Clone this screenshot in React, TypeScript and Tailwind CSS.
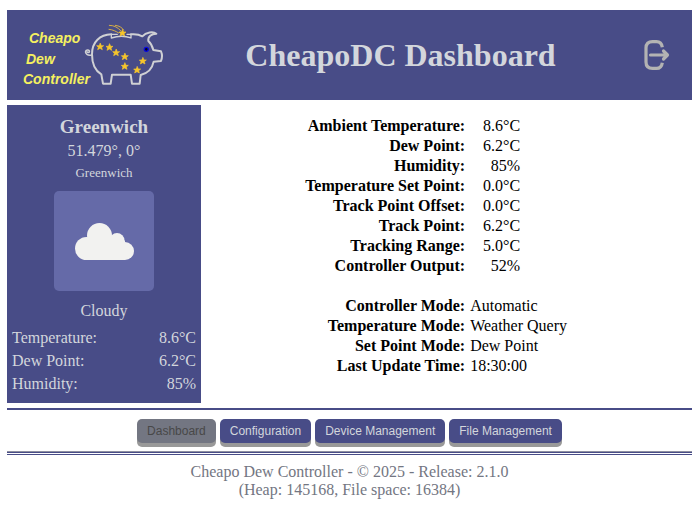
const STARS: [number, number][] = [
  [60, 80], [88, 82], [108, 98], [134, 110], [134, 139], [188, 123], [171, 150], [127, 39],
];

const READINGS = [
  ["Ambient Temperature:", "8.6°C"],
  ["Dew Point:", "6.2°C"],
  ["Humidity:", "85%"],
  ["Temperature Set Point:", "0.0°C"],
  ["Track Point Offset:", "0.0°C"],
  ["Track Point:", "6.2°C"],
  ["Tracking Range:", "5.0°C"],
  ["Controller Output:", "52%"],
];

const MODES = [
  ["Controller Mode:", "Automatic"],
  ["Temperature Mode:", "Weather Query"],
  ["Set Point Mode:", "Dew Point"],
  ["Last Update Time:", "18:30:00"],
];

const WEATHER = [
  ["Temperature:", "8.6°C"],
  ["Dew Point:", "6.2°C"],
  ["Humidity:", "85%"],
];

const PAGES = ["Dashboard", "Configuration", "Device Management", "File Management"];

function Logo() {
  return (
    <svg
      role="img"
      aria-label="Cheapo Dew Controller"
      viewBox="20 20 146 70"
      className="h-[70px] w-[146px] shrink-0"
    >
      <g className="fill-[#f5f060] font-['Liberation_Sans',sans-serif] text-[14px] font-bold italic">
        <text x="29" y="43">Cheapo</text>
        <text x="26" y="64">Dew</text>
        <text x="23" y="84">Controller</text>
      </g>
      <g transform="translate(80 20) scale(0.3333)" fill="none" strokeLinecap="round" strokeLinejoin="round">
        <g stroke="#cfd0d4" strokeWidth="6">
          <path d="M94 43C60 44 36 65 36 103C36 135 48 154 64 163L69 191H92L96 164H152L156 191H179L182 165C204 160 217 145 221 125L243 123C247 113 247 103 243 94L220 90C217 78 213 70 205 63C203 50 214 41 229 41C220 34 198 36 187 49C177 43 164 42 153 43" />
          <path d="M94 43V54C112 48 134 47 153 54V43H141M94 43H112" strokeWidth="4" />
          <path d="M35 105C23 108 15 101 17 94C19 88 29 89 28 95C27 98 23 98 22 96" strokeWidth="5" />
        </g>
        <g stroke="#d5ad45" strokeWidth="3">
          <path d="M88 16C103 16 114 23 122 32" />
          <path d="M106 16C117 17 127 23 131 30" />
          <path d="M87 28C99 29 108 34 116 39" />
        </g>
        {STARS.map(([x, y]) => (
          <path
            key={`${x}-${y}`}
            transform={`translate(${x} ${y})`}
            fill="#f6c52c"
            stroke="#f6c52c"
            strokeWidth="2"
            d="M1-10L4-3L11-3L5 2L7 9L0 5L-7 9L-5 2L-10-3L-3-3Z"
          />
        ))}
        <circle cx="199" cy="88" r="6" fill="#05051c" stroke="#0808e0" strokeWidth="4" />
      </g>
    </svg>
  );
}

function LogoutIcon() {
  return (
    <svg viewBox="0 0 28 32" className="h-8 w-7" fill="none" stroke="#b3b3b3" strokeWidth="3.2" strokeLinecap="round" aria-hidden="true">
      <path d="M19.300 8.300Q18.500 2.600 13.500 2.600H9.500Q3 2.600 3 9V23Q3 29.400 9.500 29.400H13.500Q18.500 29.400 19.300 23.700" strokeLinecap="butt" />
      <path d="M7.500 16H24M20.500 12L24.500 16L20.500 20" strokeLinejoin="round" />
    </svg>
  );
}

function Cloud() {
  return (
    <svg viewBox="-1 -0.5 60 38" className="h-[38px] w-[60px]" fill="#f2f2f0" role="img" aria-label="Cloudy">
      <circle cx="24.500" cy="13" r="12.500" />
      <circle cx="42" cy="18" r="7.500" />
      <circle cx="11.500" cy="26" r="11.500" />
      <circle cx="50" cy="28.500" r="9" />
      <rect x="11.500" y="18" width="38.500" height="19.500" />
    </svg>
  );
}

export default function App() {
  return (
    <div className="bg-white pt-2.5 pr-2 pl-[7px] font-['Liberation_Serif',serif] text-base leading-5 text-black">
      <header className="flex h-[90px] items-center bg-[#484c87] pr-[21px] pl-[13px]">
        <Logo />
        <h1 className="flex-1 pr-2 text-center text-[32px] leading-9 font-bold text-[#d3d6dc]">CheapoDC Dashboard</h1>
        <a href="#logout" aria-label="Log out">
          <LogoutIcon />
        </a>
      </header>

      <div className="mt-[5px] flex">
        <aside className="flex w-[194px] shrink-0 flex-col items-center bg-[#484c87] px-[5px] pt-2.5 pb-2 text-[#d3d6dc]">
          <h2 className="text-[19px] leading-6 font-bold">Greenwich</h2>
          <p className="mt-0.5 leading-5">51.479°, 0°</p>
          <p className="mt-0.5 text-[13px] leading-5">Greenwich</p>
          <div className="mt-2 flex size-[100px] items-center justify-center rounded-[5px] bg-[#656aa8]">
            <Cloud />
          </div>
          <p className="mt-2.5 leading-5">Cloudy</p>
          <table className="mt-[5px] w-full leading-[23px]">
            <tbody>
              {WEATHER.map(([label, value]) => (
                <tr key={label}>
                  <th scope="row" className="text-left font-normal">{label}</th>
                  <td className="text-right">{value}</td>
                </tr>
              ))}
            </tbody>
          </table>
        </aside>

        <main className="flex-1 pt-[11px]">
          <table className="w-full table-fixed">
            <tbody>
              {READINGS.map(([label, value]) => (
                <tr key={label}>
                  <th scope="row" className="w-[54%] pr-px text-right font-bold">{label}</th>
                  <td className="pl-1">
                    <div className="w-[50px] text-right">{value}</div>
                  </td>
                </tr>
              ))}
            </tbody>
          </table>
          <table className="mt-5 w-full table-fixed">
            <tbody>
              {MODES.map(([label, value]) => (
                <tr key={label}>
                  <th scope="row" className="w-[54%] pr-px text-right font-bold">{label}</th>
                  <td className="pl-1">{value}</td>
                </tr>
              ))}
            </tbody>
          </table>
        </main>
      </div>

      <nav className="mt-[5px] flex flex-wrap justify-center gap-1 border-t-2 border-[#484c87] pt-[9px] pb-2">
        {PAGES.map((page) => (
          <button
            key={page}
            type="button"
            disabled={page === "Dashboard"}
            className="h-6 rounded-[5px] bg-[#484c87] px-2.5 font-['Liberation_Sans',sans-serif] text-xs text-[#d3d6dc] shadow-[0_4px_0_#999999] disabled:bg-[#737682] disabled:text-[#484848]"
          >
            {page}
          </button>
        ))}
      </nav>

      <footer className="border-t border-[#8f90a0] text-center text-[#737682]">
        <div className="h-[3px] border-y border-[#484c87]" />
        <p className="pt-2 leading-[18px]">
          Cheapo Dew Controller - © 2025 - Release: 2.1.0
          <br />
          (Heap: 145168, File space: 16384)
        </p>
      </footer>
    </div>
  );
}
